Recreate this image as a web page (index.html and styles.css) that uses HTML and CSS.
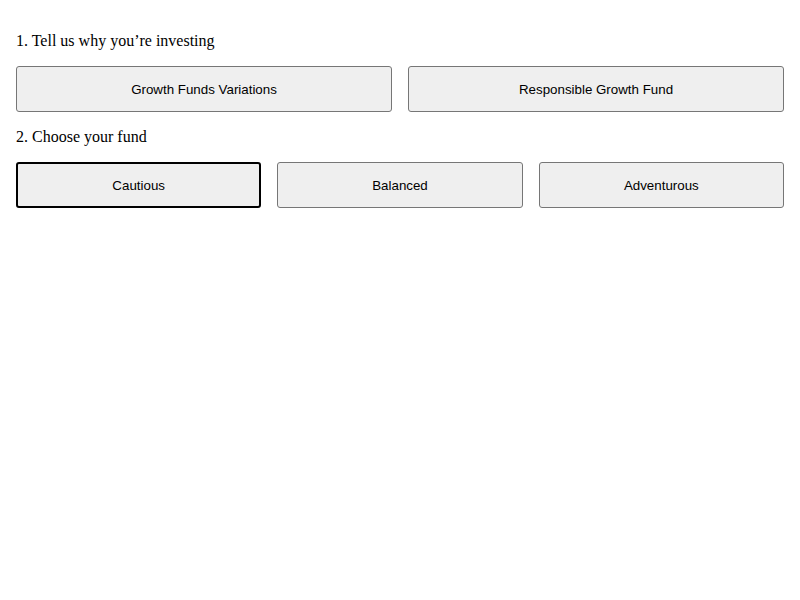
FILE: index.html
```html
<!DOCTYPE html>
<html lang="en">
<head>
<meta charset="utf-8">
<title>Fund chooser</title>
<link rel="stylesheet" href="styles.css">
</head>
<body>
<div class="page">
  <div class="question">1. Tell us why you’re investing</div>
  <div class="options two">
    <button class="option">Growth Funds Variations</button>
    <button class="option">Responsible Growth Fund</button>
  </div>
  <div class="question">2. Choose your fund</div>
  <div class="options three">
    <button class="option selected">Cautious</button>
    <button class="option">Balanced</button>
    <button class="option">Adventurous</button>
  </div>
</div>
</body>
</html>
```
FILE: styles.css
```css
html, body {
  margin: 0;
  padding: 0;
  background: #fff;
}
.page {
  padding: 32px 16px 16px;
  display: flex;
  flex-direction: column;
  gap: 16px;
}
.question {
  font-family: "Liberation Serif", "Times New Roman", serif;
  font-size: 16px;
  line-height: 18px;
  color: #000;
}
.options {
  display: grid;
  gap: 16px;
}
.options.two { grid-template-columns: 1fr 1fr; }
.options.three { grid-template-columns: 1fr 1fr 1fr; }
.option {
  box-sizing: border-box;
  height: 46px;
  margin: 0;
  padding: 0 8px;
  font-family: "Liberation Sans", Arial, sans-serif;
  font-size: 13.333px;
  color: #000;
  background: #efefef;
  border: 1px solid #767676;
  border-radius: 3px;
}
.option.selected {
  border: 2px solid #000;
  border-radius: 3px;
}
```
